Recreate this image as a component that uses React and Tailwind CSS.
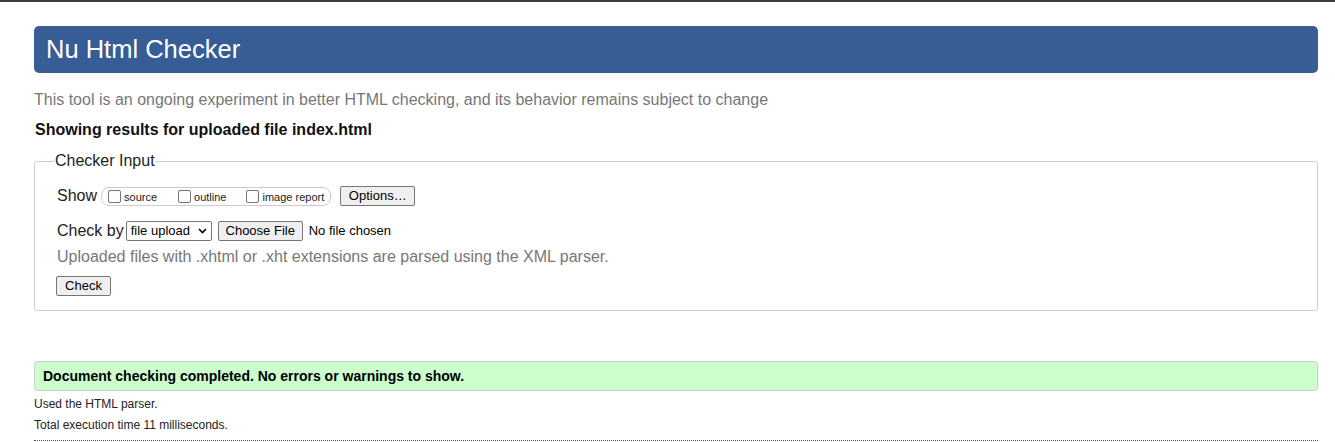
import React from "react";

function Box() {
  return <span className="inline-block w-[13px] h-[13px] border border-[#767676] rounded-[2px] bg-white shrink-0" />;
}

function Btn({ children, className = "" }) {
  return (
    <span className={"inline-flex items-center justify-center h-[20px] border border-[#767676] rounded-[2px] bg-[#efefef] text-[13px] text-black " + className}>
      {children}
    </span>
  );
}

export default function App() {
  return (
    <div className="min-h-[442px] bg-white font-['Liberation_Sans',Arial,sans-serif] text-[#222]">
      <div className="h-[2px] bg-[#3c3c3c]" />
      <div className="pl-[34px] pr-[17px]">
        <div className="mt-[24px] h-[47px] rounded-[5px] bg-[#365d95] flex items-center pl-[12px] text-white text-[25.5px] leading-none">
          Nu Html Checker
        </div>
        <div className="mt-[18px] h-[18px] leading-[18px] text-[16px] text-[#777]">
          This tool is an ongoing experiment in better HTML checking, and its behavior remains subject to change
        </div>
        <div className="mt-[12px] h-[18px] leading-[18px] text-[16px] font-bold text-[#111] pl-[1px]">
          Showing results for uploaded file index.html
        </div>
        <fieldset className="mt-[13px] border border-[#ccc] rounded-[3px] pl-[22px] pr-[22px] pb-[14px]">
          <legend className="ml-[-3px] px-[1px] text-[16px] leading-[18px] text-[#222]">Checker Input</legend>
          <div className="mt-[16px] h-[20px] flex items-center text-[16px]">
            <span>Show</span>
            <span className="ml-[4px] h-[19px] border border-[#ccc] rounded-[8px] flex items-center pl-[6px] pr-[6px] text-[11px] text-[#222]">
              <span className="flex items-center gap-[3px]"><Box /><span className="mt-[2px]">source</span></span>
              <span className="ml-[21px] flex items-center gap-[3px]"><Box /><span className="mt-[2px]">outline</span></span>
              <span className="ml-[20px] flex items-center gap-[3px]"><Box /><span className="mt-[2px]">image report</span></span>
            </span>
            <Btn className="ml-[9px] w-[75px]">Options…</Btn>
          </div>
          <div className="mt-[15px] h-[20px] flex items-center text-[16px]">
            <span>Check by</span>
            <span className="ml-[2px] w-[86px] h-[20px] border border-[#767676] rounded-[2px] bg-white flex items-center justify-between pl-[4px] pr-[4px] text-[13px] text-black">
              <span>file upload</span>
              <svg width="9" height="6" viewBox="0 0 9 6"><path d="M1 1 L4.5 4.5 L8 1" fill="none" stroke="#000" strokeWidth="1.6" /></svg>
            </span>
            <Btn className="ml-[6px] w-[85px]">Choose File</Btn>
            <span className="ml-[6px] text-[13px] text-black">No file chosen</span>
          </div>
          <div className="mt-[7px] h-[18px] leading-[18px] text-[16px] text-[#777]">
            Uploaded files with .xhtml or .xht extensions are parsed using the XML parser.
          </div>
          <div className="mt-[10px] flex">
            <Btn className="ml-[-1px] w-[55px]">Check</Btn>
          </div>
        </fieldset>
        <div className="mt-[50px] h-[30px] border border-[#ccc] rounded-[3px] bg-[#ccffcc] flex items-center pl-[8px] text-[14px] font-bold text-black">
          Document checking completed. No errors or warnings to show.
        </div>
        <div className="mt-[6px] h-[15px] leading-[15px] text-[12px] text-[#222]">Used the HTML parser.</div>
        <div className="mt-[6px] h-[15px] leading-[15px] text-[12px] text-[#222]">Total execution time 11 milliseconds.</div>
        <div className="mt-[7px] border-t border-dotted border-[#555]" />
      </div>
    </div>
  );
}
